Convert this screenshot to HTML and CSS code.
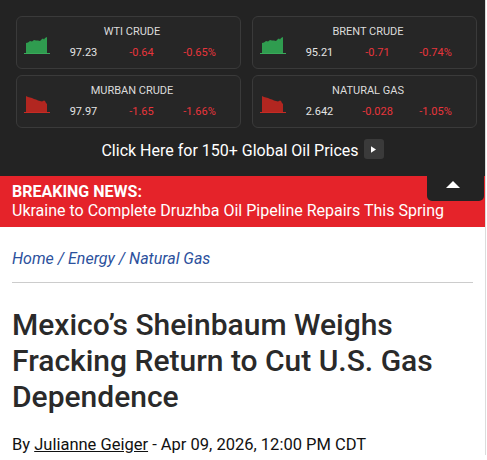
FILE: index.html
```html
<!DOCTYPE html>
<html lang="en">
<head>
<meta charset="utf-8">
<title>Oil Prices</title>
<link rel="stylesheet" href="styles.css">
</head>
<body>
<div class="page">
  <section class="ticker">
    <div class="cards">
      <div class="card">
        <svg class="spark" viewBox="0 0 26 17" width="26" height="17"><polygon class="up" points="2,16 2,6 4,5.5 6,4 8,4.5 10,3 12,3.5 14,3.5 16,4 18,2 19,1.5 20,2.5 21,1 23,0 23,16"/><line class="up-line" x1="0" y1="16.5" x2="26" y2="16.5"/></svg>
        <div class="name">WTI CRUDE</div>
        <div class="val">97.23</div>
        <div class="val neg">-0.64</div>
        <div class="val neg">-0.65%</div>
      </div>
      <div class="card">
        <svg class="spark" viewBox="0 0 26 17" width="26" height="17"><polygon class="up" points="2,16 2,6 4,5.5 6,4 8,4.5 10,3 12,3.5 14,3.5 16,4 18,2 19,1.5 20,2.5 21,1 23,0 23,16"/><line class="up-line" x1="0" y1="16.5" x2="26" y2="16.5"/></svg>
        <div class="name">BRENT CRUDE</div>
        <div class="val">95.21</div>
        <div class="val neg">-0.71</div>
        <div class="val neg">-0.74%</div>
      </div>
      <div class="card">
        <svg class="spark" viewBox="0 0 26 17" width="26" height="17"><polygon class="down" points="2,16 2,0 4,1 6,1.5 8,2 10,3 12,3.5 14,4.5 16,5 18,5.5 20,4.5 21,5 22,7 23,8 23,16"/><line class="down-line" x1="0" y1="16.5" x2="26" y2="16.5"/></svg>
        <div class="name">MURBAN CRUDE</div>
        <div class="val">97.97</div>
        <div class="val neg">-1.65</div>
        <div class="val neg">-1.66%</div>
      </div>
      <div class="card">
        <svg class="spark" viewBox="0 0 26 17" width="26" height="17"><polygon class="down" points="2,16 2,0 4,1 6,1.5 8,2 10,3 12,3.5 14,4.5 16,5 18,5.5 20,4.5 21,5 22,7 23,8 23,16"/><line class="down-line" x1="0" y1="16.5" x2="26" y2="16.5"/></svg>
        <div class="name">NATURAL GAS</div>
        <div class="val">2.642</div>
        <div class="val neg">-0.028</div>
        <div class="val neg">-1.05%</div>
      </div>
    </div>
    <a class="all-prices" href="#">
      <span class="all-text">Click Here for 150+ Global Oil Prices</span>
      <span class="all-btn"><svg viewBox="0 0 6 8" width="5" height="7"><polygon points="0,0 6,4 0,8" fill="#fff"/></svg></span>
    </a>
  </section>
  <section class="breaking">
    <div class="breaking-label">BREAKING NEWS:</div>
    <div class="breaking-title">Ukraine to Complete Druzhba Oil Pipeline Repairs This Spring</div>
    <button class="collapse" aria-label="Collapse"><svg viewBox="0 0 14 7" width="14" height="7"><polygon points="7,0 14,7 0,7" fill="#fff"/></svg></button>
  </section>
  <main class="article">
    <nav class="crumbs"><a href="#">Home</a> / <a href="#">Energy</a> / <a href="#">Natural Gas</a></nav>
    <hr class="rule">
    <h1 class="title">Mexico’s Sheinbaum Weighs Fracking Return to Cut U.S. Gas Dependence</h1>
    <p class="byline">By <a href="#">Julianne Geiger</a> - Apr 09, 2026, 12:00 PM CDT</p>
  </main>
</div>
</body>
</html>
```
FILE: styles.css
```css
* { box-sizing: border-box; }
html, body { margin: 0; padding: 0; background: #fff; }
body { font-family: Roboto, "Liberation Sans", sans-serif; overflow: hidden; }
.page { width: 486px; border-right: 1px solid #dcdcdc; }

.ticker { background: #232323; padding: 16px 8px 17px 16px; }
.cards { display: grid; grid-template-columns: 225px 225px; column-gap: 11px; row-gap: 6px; }
.card {
  height: 53px;
  border: 1px solid #3a3a3a;
  border-radius: 6px;
  background: #262626;
  padding-top: 7.5px;
  display: grid;
  grid-template-columns: 37.5px 58px 58px 58px;
  grid-template-rows: 13px 13px;
  row-gap: 8px;
  font-size: 11px;
  line-height: 13px;
}
.spark { grid-column: 1; grid-row: 1 / 3; margin: 12.5px 0 0 7px; display: block; }
.spark .up { fill: #2f9c4f; }
.spark .up-line { stroke: #3aa95a; stroke-width: 1; }
.spark .down { fill: #b22620; }
.spark .down-line { stroke: #c52b24; stroke-width: 1; }
.name { grid-column: 2 / 5; grid-row: 1; text-align: center; padding-right: 19px; color: #dcdcdc; }
.val { grid-row: 2; text-align: center; color: #e4e4e4; }
.val.neg { color: #e8353c; }

.all-prices { margin-top: 11px; height: 20px; display: flex; justify-content: center; align-items: flex-end; gap: 5px; text-decoration: none; color: #fff; margin-left: -8px; }
.all-text { font-size: 16px; line-height: 17px; }
.all-btn { width: 20px; height: 20px; border-radius: 3px; background: #3a3a3a; display: flex; align-items: center; justify-content: center; }
.all-btn svg { display: block; }

.breaking { position: relative; background: #e5232a; color: #fff; padding: 6px 12px 7px; }
.breaking-label { font-size: 16px; line-height: 19px; font-weight: 700; }
.breaking-title { font-size: 16px; line-height: 19px; }
.collapse {
  position: absolute; top: 0; right: 1px; width: 57px; height: 25px;
  border: 0; padding: 5px 0 0; margin: 0; background: #232323;
  border-radius: 0 0 5px 5px; display: flex; justify-content: center; align-items: flex-start;
}
.collapse svg { display: block; margin-left: -6px; }

.article { padding: 22px 12px 0; }
.crumbs { font-size: 16px; line-height: 20px; font-style: italic; color: #2c519d; }
.crumbs a { color: inherit; text-decoration: none; }
.rule { border: 0; border-top: 1px solid #cccccc; margin: 13px 0 0; }
.title { margin: 24px 0 0; font-size: 30px; line-height: 36px; font-weight: 500; color: #2a2a2a; }
.byline { margin: 20px 0 0; font-size: 16.5px; line-height: 20px; color: #111; }
.byline a { color: #111; text-decoration: underline; }
```
